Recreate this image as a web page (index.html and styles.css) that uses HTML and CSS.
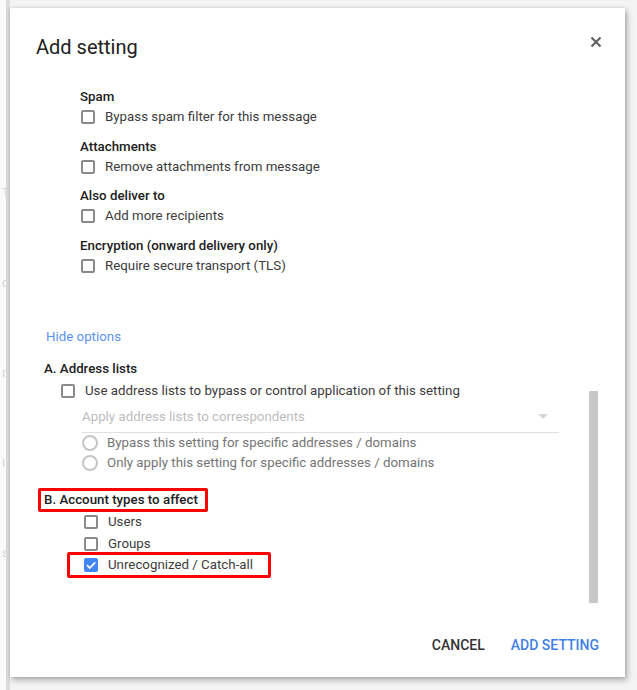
FILE: index.html
```html
<!DOCTYPE html>
<html lang="en">
<head>
    <meta charset="UTF-8">
    <title>Add setting</title>
    <link rel="stylesheet" href="styles.css">
</head>
<body>
<div class="page-strip">
    <span>T</span><span>c</span><span>n</span><span>i</span><span>s</span>
</div>

<div class="dialog">
    <header class="dialog-header">
        <h1>Add setting</h1>
        <button class="close-button" aria-label="Close">
            <svg width="12" height="12" viewBox="0 0 12 12">
                <path d="M1.5 1.5 L10.5 10.5 M10.5 1.5 L1.5 10.5" stroke="#616161" stroke-width="2.2" fill="none"/>
            </svg>
        </button>
    </header>

    <div class="dialog-body">
        <div class="content">
            <!-- Options section -->
            <div class="options">
                <div class="group">
                    <div class="group-label">Spam</div>
                    <label class="check-row"><span class="checkbox"></span>Bypass spam filter for this message</label>
                </div>
                <div class="group">
                    <div class="group-label">Attachments</div>
                    <label class="check-row"><span class="checkbox"></span>Remove attachments from message</label>
                </div>
                <div class="group">
                    <div class="group-label">Also deliver to</div>
                    <label class="check-row"><span class="checkbox"></span>Add more recipients</label>
                </div>
                <div class="group">
                    <div class="group-label">Encryption (onward delivery only)</div>
                    <label class="check-row"><span class="checkbox"></span>Require secure transport (TLS)</label>
                </div>
            </div>

            <a class="hide-options" href="#">Hide options</a>

            <!-- A. Address lists -->
            <div class="section-title">A. Address lists</div>
            <div class="address-lists">
                <label class="check-row"><span class="checkbox"></span>Use address lists to bypass or control application of this setting</label>
                <div class="disabled-block">
                    <div class="select">
                        <span>Apply address lists to correspondents</span>
                        <span class="select-arrow"></span>
                    </div>
                    <label class="radio-row"><span class="radio"></span>Bypass this setting for specific addresses / domains</label>
                    <label class="radio-row"><span class="radio"></span>Only apply this setting for specific addresses / domains</label>
                </div>
            </div>

            <!-- B. Account types -->
            <div class="section-title highlight">B. Account types to affect</div>
            <div class="account-types">
                <label class="check-row"><span class="checkbox"></span>Users</label>
                <label class="check-row"><span class="checkbox"></span>Groups</label>
                <label class="check-row highlight"><span class="checkbox checked">
                    <svg width="14" height="14" viewBox="0 0 14 14"><path d="M3 7.2 L5.8 10 L11.2 4.4" stroke="#fff" stroke-width="1.8" fill="none"/></svg>
                </span>Unrecognized / Catch-all</label>
            </div>
        </div>
        <div class="scrollbar">
            <div class="thumb"></div>
        </div>
    </div>

    <footer class="dialog-footer">
        <button class="text-button">Cancel</button>
        <button class="text-button primary">Add setting</button>
    </footer>
</div>
</body>
</html>
```

FILE: styles.css
```css
body {
    margin: 0;
    background-color: #f4f4f4;
    font-family: Roboto, "Liberation Sans", Arial, sans-serif;
    color: #212121;
    height: 690px;
    position: relative;
    overflow: hidden;
}

/* Page behind the dialog, only a sliver shows on the left */
.page-strip {
    position: absolute;
    left: 0;
    top: 0;
    width: 6px;
    height: 690px;
    border-right: 4px solid #dcdcdc;
    background: #fafafa;
    color: #d8d8d8;
    font-size: 13px;
    overflow: hidden;
}

.page-strip span {
    display: block;
    height: 90px;
    margin-left: 2px;
}

.page-strip span:first-child {
    margin-top: 185px;
}

/* Dialog */
.dialog {
    position: absolute;
    left: 10px;
    top: 8px;
    width: 615px;
    height: 669px;
    background: #fff;
    box-shadow: 2px 3px 6px rgba(0, 0, 0, 0.3), 0 0 3px rgba(0, 0, 0, 0.12);
    display: flex;
    flex-direction: column;
}

.dialog-header {
    display: flex;
    justify-content: space-between;
    padding: 25px 22px 0 26px;
}

.dialog-header h1 {
    margin: 0;
    font-size: 20px;
    font-weight: 400;
    line-height: 28px;
    color: #212121;
}

.close-button {
    background: none;
    border: none;
    padding: 0;
    margin-top: 3px;
    width: 14px;
    height: 14px;
    cursor: pointer;
}

.dialog-body {
    flex: 1;
    display: flex;
    min-height: 0;
}

.content {
    flex: 1;
    padding-top: 26px;
    font-size: 13.3px;
}

/* Options */
.options {
    padding-left: 70px;
}

.group {
    margin-bottom: 9.5px;
}

.group-label {
    font-weight: 500;
    line-height: 20px;
    color: #212121;
}

.check-row {
    display: flex;
    align-items: center;
    line-height: 20px;
    height: 20px;
    color: #3c3c3c;
}

.checkbox {
    width: 14px;
    height: 14px;
    box-sizing: border-box;
    border: 2px solid #8a8a8a;
    border-radius: 2px;
    margin: 0 10px 0 1px;
    flex: none;
    display: flex;
}

.checkbox.checked {
    background-color: #4285f4;
    border-color: #4285f4;
}

.checkbox.checked svg {
    margin: -2px;
}

.hide-options {
    display: block;
    margin: 51px 0 0 36px;
    line-height: 20px;
    color: #5b93f4;
    text-decoration: none;
}

.section-title {
    margin: 12px 0 0 34px;
    font-weight: 500;
    line-height: 20px;
    color: #212121;
}

.address-lists {
    padding-left: 50px;
    margin-top: 2px;
}

.disabled-block {
    padding-left: 22px;
    width: 477px;
}

.select {
    display: flex;
    justify-content: space-between;
    align-items: center;
    height: 31px;
    border-bottom: 1px solid #e0e0e0;
    color: #bdbdbd;
}

.select-arrow {
    width: 0;
    height: 0;
    border-left: 5px solid transparent;
    border-right: 5px solid transparent;
    border-top: 5px solid #d6d6d6;
    margin-right: 11px;
}

.radio-row {
    display: flex;
    align-items: center;
    height: 20px;
    color: #757575;
}

.radio {
    width: 16px;
    height: 16px;
    box-sizing: border-box;
    border: 2px solid #c6c6c6;
    border-radius: 50%;
    margin-right: 9px;
    flex: none;
}

/* Red annotation boxes */
.highlight {
    border: 3px solid #f00;
    border-radius: 2px;
}

.section-title.highlight {
    display: inline-block;
    margin: 15px 0 0 28px;
    padding: 0 7px 0 3px;
    line-height: 18px;
}

.account-types {
    padding-left: 73px;
}

.account-types .check-row {
    margin-bottom: 2px;
}

.account-types .check-row.highlight {
    margin: -4px 0 0 -16px;
    width: 185px;
    padding-left: 13px;
}

/* Scrollbar */
.scrollbar {
    width: 9px;
    margin-right: 27px;
    display: flex;
    flex-direction: column;
}

.thumb {
    margin-top: auto;
    height: 212px;
    background: #c8c8c8;
}

/* Footer */
.dialog-footer {
    display: flex;
    justify-content: flex-end;
    gap: 26px;
    padding: 32px 26px 22px 0;
}

.text-button {
    background: none;
    border: none;
    padding: 0;
    font-family: Roboto, "Liberation Sans", Arial, sans-serif;
    font-size: 14px;
    font-weight: 500;
    line-height: 20px;
    text-transform: uppercase;
    color: #333;
    cursor: pointer;
}

.text-button.primary {
    color: #3f7fe8;
}
```
